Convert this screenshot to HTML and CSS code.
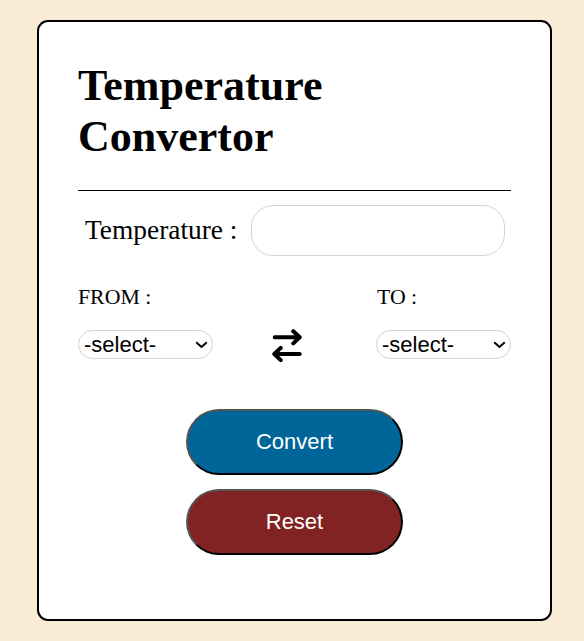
FILE: index.html
```html
<!DOCTYPE html>
<html lang="en">
<head>
<meta charset="utf-8">
<title>Temperature Convertor</title>
<link rel="stylesheet" href="styles.css">
</head>
<body>
<main class="card">
  <h1 class="title">Temperature Convertor</h1>
  <div class="temp-row">
    <label class="temp-label" for="temp">Temperature :</label>
    <input id="temp" class="temp-input" type="text">
  </div>
  <div class="units">
    <div class="unit">
      <label for="from">FROM :</label>
      <div class="select-wrap">
        <select id="from" class="select"><option>-select-</option></select>
        <svg class="chevron" viewBox="0 0 13 8" aria-hidden="true"><path d="M1.200 1.200L6.500 6L11.800 1.200"/></svg>
      </div>
    </div>
    <svg class="swap" viewBox="0 0 30 34" aria-hidden="true">
      <path d="M2.700 8.300H27M21.300 2.200L27.700 8.300L21.300 14.400M27.700 25H3M8.700 18.900L2.300 25L8.700 31.100"/>
    </svg>
    <div class="unit">
      <label class="to-label" for="to">TO :</label>
      <div class="select-wrap">
        <select id="to" class="select"><option>-select-</option></select>
        <svg class="chevron" viewBox="0 0 13 8" aria-hidden="true"><path d="M1.200 1.200L6.500 6L11.800 1.200"/></svg>
      </div>
    </div>
  </div>
  <div class="actions">
    <button class="btn convert" type="button">Convert</button>
    <button class="btn reset" type="button">Reset</button>
  </div>
</main>
</body>
</html>
```
FILE: styles.css
```css
* { box-sizing: border-box; }
body {
  margin: 0;
  padding: 20px 32px 20px 37px;
  height: 641px;
  background: #faebd7;
  font-family: "Liberation Serif", "Times New Roman", serif;
  color: #000;
}
.card {
  height: 601px;
  padding: 38px 39px;
  background: #fff;
  border: 2px solid #000;
  border-radius: 11px;
}
.title {
  margin: 0;
  height: 131px;
  border-bottom: 1px solid #000;
  font-size: 44px;
  line-height: 51px;
}
.temp-row {
  display: flex;
  align-items: center;
  justify-content: space-between;
  margin-top: 14px;
  padding: 0 6px 0 7px;
}
.temp-label {
  font-size: 27.4px;
}
.temp-input {
  width: 254px;
  height: 51px;
  border: 1px solid #d3d3d3;
  border-radius: 22px;
}
.units {
  display: flex;
  justify-content: space-between;
  align-items: flex-end;
  margin-top: 28px;
}
.unit {
  display: flex;
  flex-direction: column;
  gap: 20px;
  width: 135px;
  font-size: 21.8px;
  line-height: 26px;
}
.to-label { padding-left: 1px; }
.select-wrap {
  position: relative;
  height: 29px;
}
.select {
  display: block;
  width: 135px;
  height: 29px;
  padding: 0 0 0 5px;
  appearance: none;
  border: 1px solid #d3d3d3;
  border-radius: 15px;
  background: #fff;
  color: #000;
  font-family: "Liberation Sans", Arial, sans-serif;
  font-size: 22px;
}
.chevron {
  position: absolute;
  top: 11px;
  right: 5px;
  width: 13px;
  height: 8px;
  fill: none;
  stroke: #000;
  stroke-width: 2;
  pointer-events: none;
}
.swap {
  width: 30px;
  height: 34px;
  margin: 0 16px -4px 0;
  fill: none;
  stroke: #000;
  stroke-width: 4;
  stroke-linecap: round;
  stroke-linejoin: round;
}
.actions {
  display: flex;
  flex-direction: column;
  align-items: center;
  gap: 14px;
  margin-top: 50px;
}
.btn {
  width: 217px;
  height: 66px;
  border: 2px outset #000;
  border-radius: 33px;
  color: #fff;
  font-family: "Liberation Sans", Arial, sans-serif;
  font-size: 22px;
}
.convert { background: #006699; }
.reset { background: #822323; }
```
